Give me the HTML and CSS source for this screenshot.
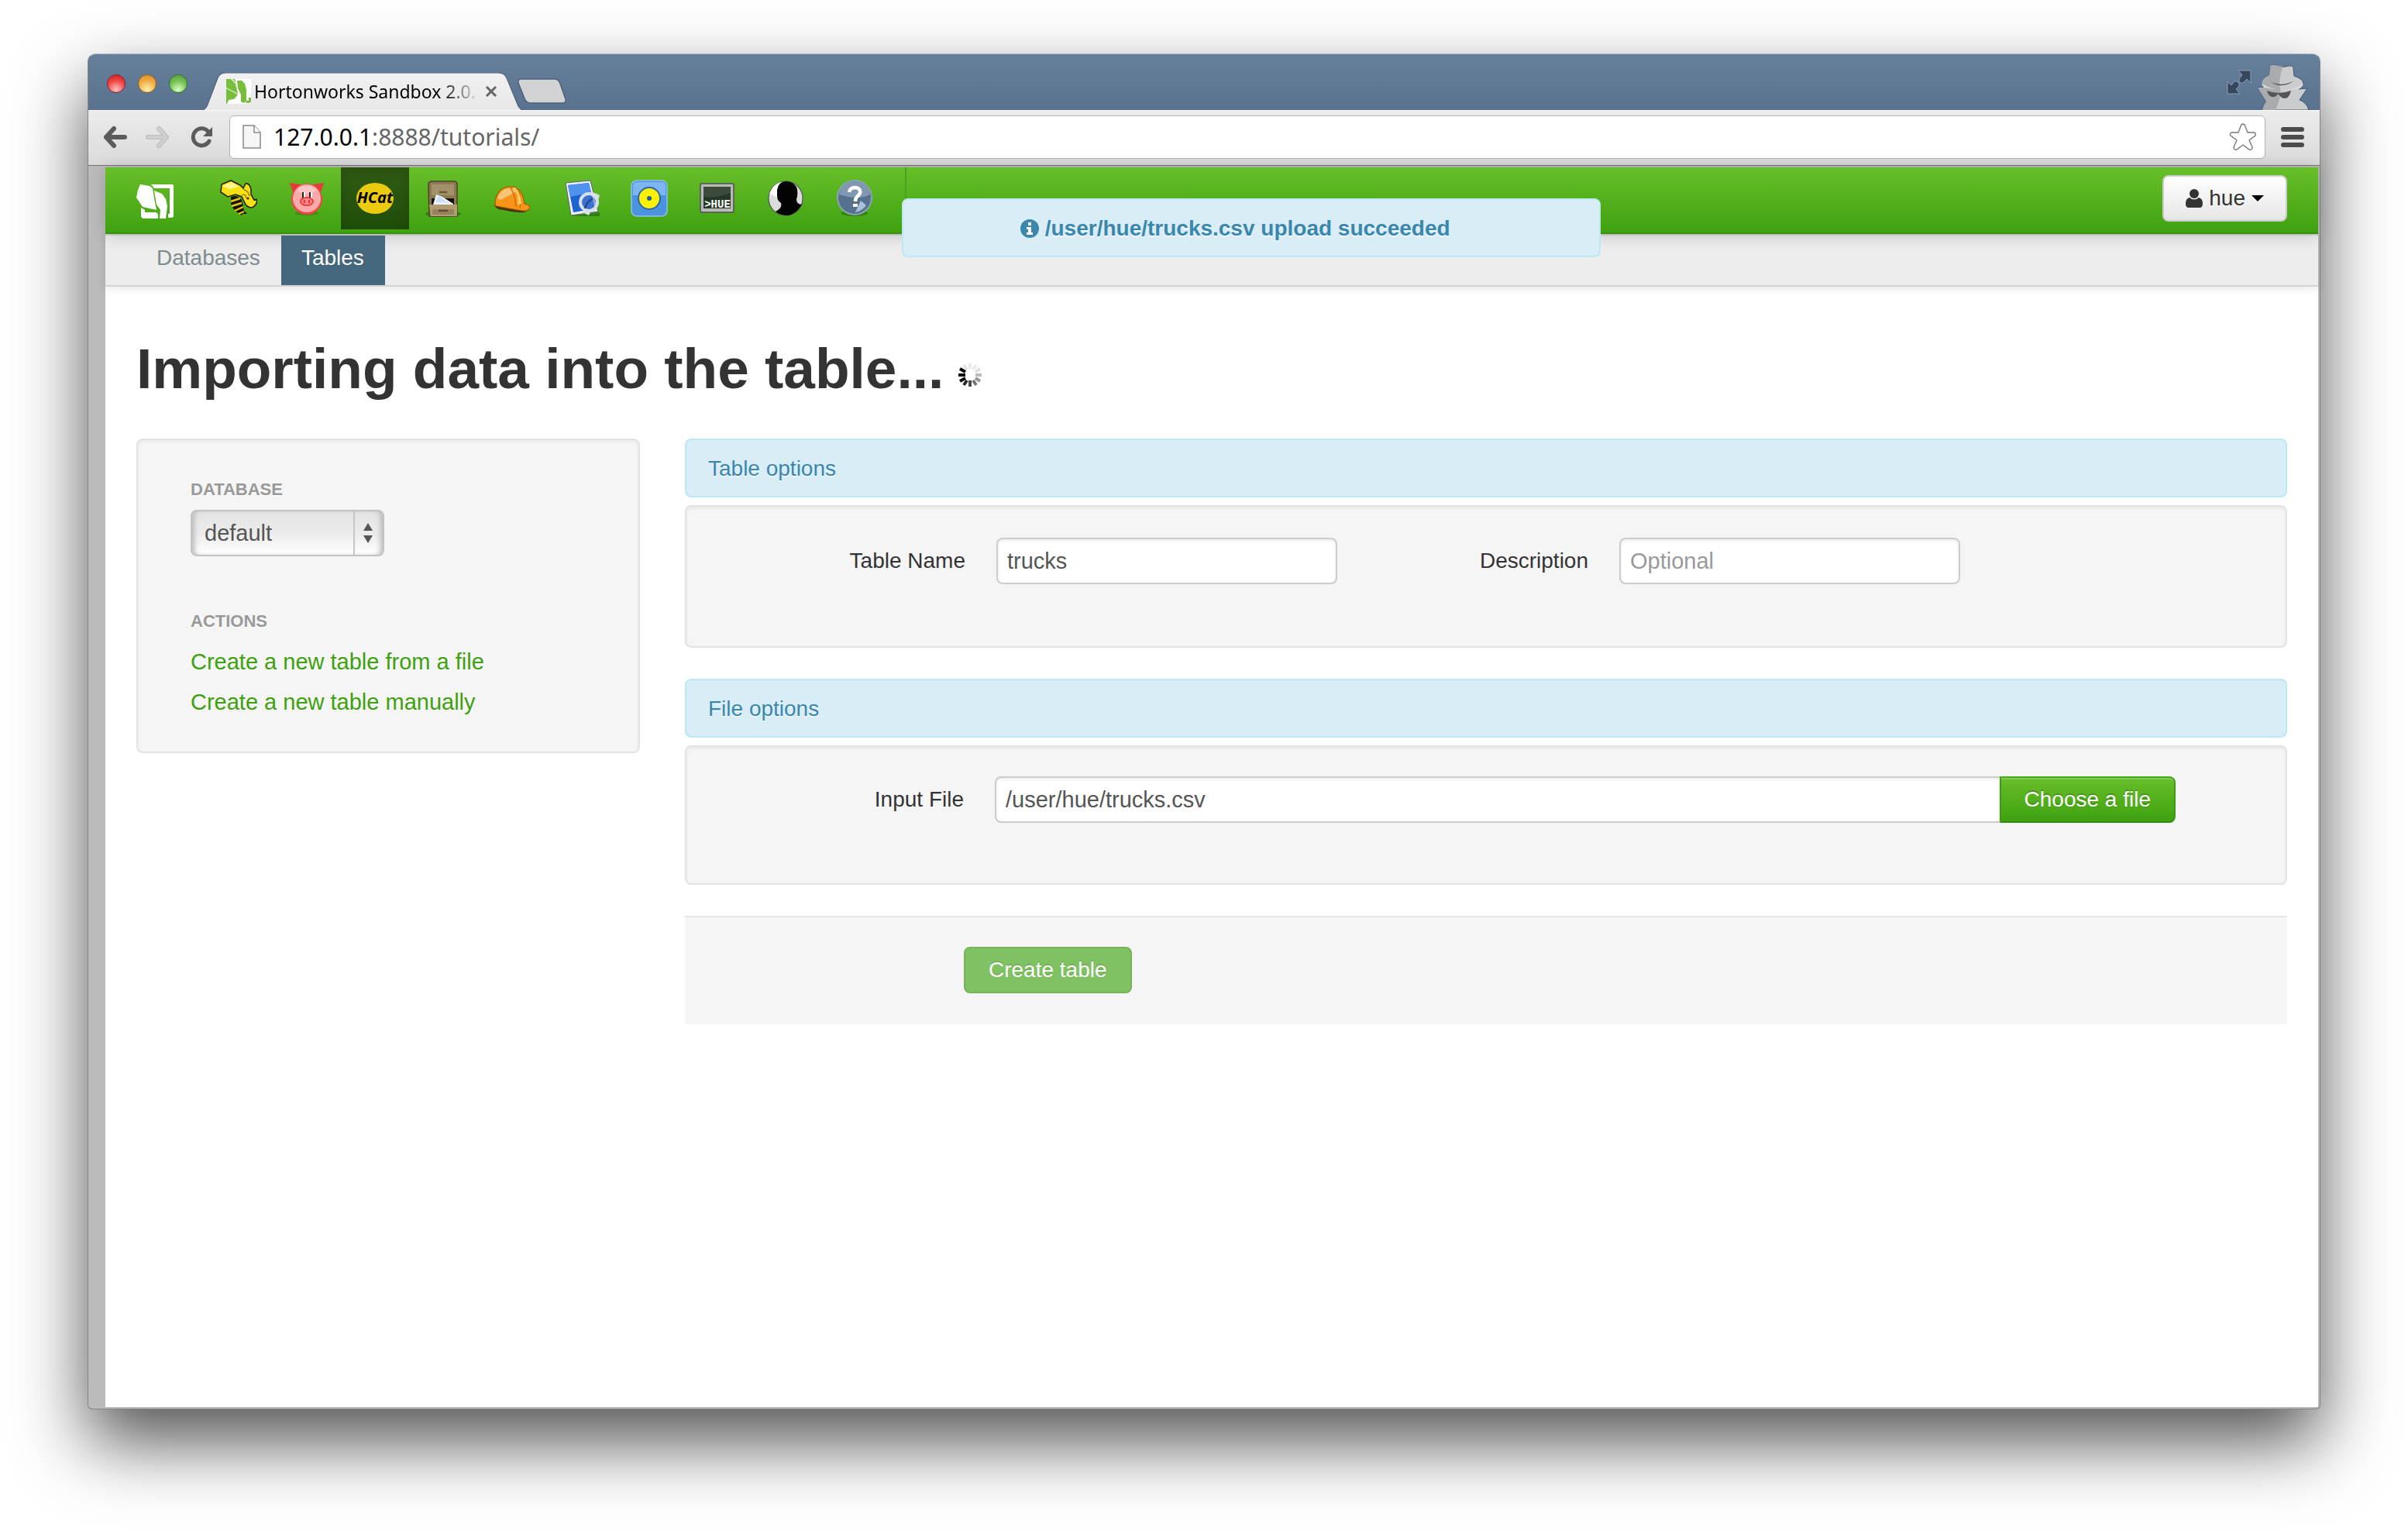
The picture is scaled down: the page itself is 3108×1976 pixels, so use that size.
FILE: index.html
```html
<!DOCTYPE html>
<html lang="en">
<head>
<meta charset="utf-8">
<title>Hortonworks Sandbox 2.0</title>
<link rel="stylesheet" href="styles.css">
</head>
<body>
<div class="window">
  <header class="titlebar">
    <div class="lights">
      <span class="light light-close"></span>
      <span class="light light-min"></span>
      <span class="light light-max"></span>
    </div>
    <div class="tab">
      <svg class="tab-shape" viewBox="0 0 414 48" preserveAspectRatio="none" aria-hidden="true">
        <defs><linearGradient id="tabfill" x1="0" y1="0" x2="0" y2="1"><stop offset="0" stop-color="#f1f1f1"/><stop offset="1" stop-color="#e8e8e8"/></linearGradient></defs>
        <path d="M0 48 Q5 47 7 41 L20 7 Q23 0 30 0 H382 Q390 0 393 7 L407 41 Q409 47 414 48Z" fill="url(#tabfill)"/>
        <path d="M0 48 Q5 47 7 41 L20 7 Q23 0 30 0 H382 Q390 0 393 7 L407 41 Q409 47 414 48" fill="none" stroke="#41546d" stroke-width="1"/>
      </svg>
      <svg class="favicon" width="32" height="32" viewBox="0 0 32 32" aria-hidden="true">
        <rect width="32" height="32" fill="#fff"/>
        <path d="M0 0H6L12 6 15 19 0 11Z M0 12L15 20 10 26 3 27 1 32H0Z M8 0H11L13 5Z" fill="#78be3c"/>
        <path d="M14 2H20L24 6 26 14V29L22 31 19 29 19 20 15 12Z" fill="#78be3c"/>
        <path d="M29 24H32V30H29Z M26 28H30V31H26Z" fill="#78be3c"/>
      </svg>
      <span class="tab-title">Hortonworks Sandbox 2.0.</span>
      <button class="plain" type="button" aria-label="Close tab">
        <svg width="16" height="16" viewBox="0 0 16 16"><path d="M2 2L14 14M14 2L2 14" stroke="#666" stroke-width="3"/></svg>
      </button>
    </div>
    <button class="plain newtab" type="button" aria-label="New tab">
      <svg width="64" height="33" viewBox="0 0 64 33"><path d="M5 1H47Q53 1 55 7L62 27Q63 32 58 32H17Q11 32 9 26L1 6Q0 1 5 1Z" fill="#d3d3d5" stroke="#4c607a" stroke-width="1.5"/></svg>
    </button>
    <div class="titlebar-end">
      <svg class="fullscreen" width="32" height="32" viewBox="0 0 32 32" aria-hidden="true">
        <path d="M15 1H31V17L26 12 21 17H18L16 15V12L20 7Z M1 31V15L6 20 10 15H13L16 18V21L12 25 17 31Z" fill="#34475f" stroke="#8aa0b8" stroke-width="1"/>
      </svg>
      <svg width="70" height="60" viewBox="0 0 70 60" aria-hidden="true">
        <path d="M18 4Q19 1 24 2Q33 6 42 3Q47 2 48 5L49 16Q61 20 61 26Q60 30 55 33L66 32L56 47Q65 50 68 60H8Q9 54 13 49L2 31H10Q7 28 7 25Q9 18 17 15Z" fill="#cbccce" stroke="#3f5470" stroke-width="1"/>
        <path d="M18 4Q19 1 24 2L34 4Q31 14 30 27Q34 40 25 60H8Q9 54 13 49L2 31H10Q7 28 7 25Q9 18 17 15Z" fill="#a9abae"/>
        <path d="M7 26Q34 42 61 26Q60 30 55 33Q34 36 10 31Z" fill="#d9dadb"/>
        <path d="M18 23Q33 31 49 22Q33 34 18 23Z" fill="#555"/>
        <path d="M14 35Q21 38 29 38Q26 44 20 43Q15 41 14 35ZM28 38Q37 38 45 35Q43 45 36 45Q31 44 28 38Z" fill="#555"/>
        <path d="M53 51L65 34L55 48Z" fill="#777"/>
      </svg>
    </div>
  </header>

  <div class="toolbar">
    <button class="plain" type="button" aria-label="Back">
      <svg width="34" height="30" viewBox="0 0 34 30"><path d="M15 4L5 15L15 26M5 15H29" fill="none" stroke="#5b5b5b" stroke-width="6" stroke-linecap="round" stroke-linejoin="round"/></svg>
    </button>
    <button class="plain" type="button" aria-label="Forward">
      <svg width="34" height="30" viewBox="0 0 34 30"><path d="M19 4L29 15L19 26M29 15H5" fill="none" stroke="#bdbdbd" stroke-width="6" stroke-linecap="round" stroke-linejoin="round"/><path d="M19 4L29 15L19 26M29 15H5" fill="none" stroke="#cfcfcf" stroke-width="4" stroke-linecap="round" stroke-linejoin="round"/></svg>
    </button>
    <button class="plain" type="button" aria-label="Reload">
      <svg width="30" height="30" viewBox="0 0 30 30"><path d="M24 20A11 11 0 1 1 22 7" fill="none" stroke="#5b5b5b" stroke-width="5" stroke-linecap="round"/><path d="M28 2V14H16Z" fill="#5b5b5b"/></svg>
    </button>
    <div class="omnibox">
      <svg width="24" height="32" viewBox="0 0 24 32" aria-hidden="true"><path d="M1 1H15L23 10V30H1Z" fill="#f6f6f6" stroke="#8a8a8a" stroke-width="1.5"/><path d="M15 1V10H23" fill="#fff" stroke="#8a8a8a" stroke-width="1.5"/></svg>
      <span class="url"><b>127.0.0.1</b>:8888/tutorials/</span>
      <button class="plain" type="button" aria-label="Bookmark this page">
        <svg width="36" height="36" viewBox="0 0 36 36"><path d="M18 1Q20 1 21 4L24 12H32Q35 13 34 16L26 22L30 31Q30 35 26 34L18 28L10 34Q6 35 6 31L10 22L2 16Q0 13 4 12H12L15 4Q16 1 18 1Z" fill="#fff" stroke="#7a7a7a" stroke-width="1.4"/></svg>
      </button>
    </div>
    <button class="plain" type="button" aria-label="Menu">
      <svg width="30" height="28" viewBox="0 0 30 28"><g fill="#4b4b4b"><rect y="1" width="30" height="6" rx="3"/><rect y="11" width="30" height="6" rx="3"/><rect y="21" width="30" height="6" rx="3"/></g></svg>
    </button>
  </div>

  <div class="viewport">
    <div class="page">
      <nav class="navbar" aria-label="Applications">
        <a class="brand" href="#" aria-label="Hortonworks">
          <svg width="48" height="48" viewBox="0 0 48 48"><g fill="#fff"><path d="M5 2L17 4 21 7 23 20 26 35 8 31 0 19 2 9Z"/><path d="M23 10L33 14 38 21 40 30 38 46H30L31 35 26 28Z"/><path d="M19 2H46Q48 2 48 4V42Q48 45 45 45H41V40H43V7H23ZM6 32L11 35V38H25Q28 39 28 42V46H10Q6 46 6 42Z"/></g></svg>
        </a>
        <a class="app" href="#" aria-label="Beeswax">
          <svg width="48" height="48" viewBox="0 0 48 48">
            <path d="M14 22Q23 19 28 26Q30 33 31 40L35 44H29L28 46Q16 39 14 31Z" fill="#1a1502"/>
            <path d="M14 28L26 24M15 34L28 30M19 40L30 35M24 44L31 41" stroke="#e6c61b" stroke-width="2.4"/>
            <path d="M2 6L14 1 26 7 30 11 33 5Q38 4 40 12L40 19 44 26 48 25Q48 33 41 36Q34 36 31 28L28 22 20 19 10 22 1 16Z" fill="#f5e013" stroke="#2a2304" stroke-width="1.6"/>
            <path d="M3 8L15 3 25 9 12 12Z" fill="#fff58b"/><path d="M30 12L36 16 38 21M28 20Q33 17 34 24" fill="none" stroke="#917a00" stroke-width="1.4"/>
            <circle cx="36" cy="24" r="1.5" fill="#2a2304"/>
          </svg>
        </a>
        <a class="app" href="#" aria-label="Pig">
          <svg width="48" height="48" viewBox="0 0 48 48">
            <ellipse cx="24" cy="43" rx="15" ry="3" fill="#2a740b" opacity=".5"/>
            <path d="M2 4L16 6 6 16Z M46 4L32 6 42 16Z" fill="#e83a3a"/>
            <ellipse cx="24" cy="25" rx="20" ry="20" fill="#f04545"/><ellipse cx="24" cy="24" rx="18" ry="18" fill="#fba9a9"/>
            <ellipse cx="24" cy="13" rx="12" ry="5" fill="#fff" opacity=".3"/>
            <path d="M18 16H20V24H18ZM27 16H29V24H27Z" fill="#222"/><path d="M20 16H22V24H20ZM29 16H31V24H29Z" fill="#fff"/>
            <ellipse cx="24" cy="28" rx="8" ry="5" fill="#fb9090" stroke="#ee3b3b" stroke-width="2"/><ellipse cx="21" cy="28" rx="1.5" ry="2.5" fill="#e83a3a"/><ellipse cx="27" cy="28" rx="1.5" ry="2.5" fill="#e83a3a"/>
          </svg>
        </a>
        <a class="app app-active" href="#">
          <svg width="48" height="48" viewBox="0 0 48 48">
            <ellipse cx="24" cy="24" rx="24" ry="20" fill="#ebcb10"/>
            <text class="hcat" x="24" y="30" text-anchor="middle">HCat</text>
          </svg>
        </a>
        <a class="app" href="#" aria-label="File Browser">
          <svg width="48" height="48" viewBox="0 0 48 48">
            <ellipse cx="24" cy="44" rx="23" ry="4" fill="#23600a" opacity=".6"/>
            <path d="M5 6Q5 2 10 2H38Q42 2 42 6V47H6Z" fill="#8b7954" stroke="#4c4029" stroke-width="1.5"/>
            <path d="M9 6H38V20H9Z" fill="#a3916a"/><path d="M19 16H29" stroke="#6d5c3b" stroke-width="2.5"/>
            <path d="M9 24H38V33H9Z" fill="#16120a"/><path d="M11 32L15 19 23 22 37 31V33H11Z" fill="#eef4fc"/><path d="M14 29L18 20 31 30Z" fill="#cfe0f4"/>
            <path d="M6 32H42V47H8Z" fill="#b19d72"/><path d="M10 45V38H38V45Z" fill="#96835c"/><path d="M18 40H30" stroke="#5d4e31" stroke-width="2.5"/>
          </svg>
        </a>
        <a class="app" href="#" aria-label="Job Designer">
          <svg width="48" height="48" viewBox="0 0 48 48">
            <path d="M2 31Q2 38 14 39Q32 43 41 42Q48 39 47 34L40 29Z" fill="#45340d"/>
            <path d="M3 30Q4 12 20 9Q34 7 39 22L41 31Q47 32 48 36Q46 41 38 40Q20 37 5 34Q2 33 3 30Z" fill="#f7941c" stroke="#a85b00" stroke-width="1.2"/>
            <path d="M6 24Q10 12 20 11Q27 10 31 15L10 26Z" fill="#fcc577"/><path d="M22 9Q29 18 30 35M31 11Q38 20 35 37" fill="none" stroke="#d26d00" stroke-width="1.5"/><path d="M29 10Q36 17 37 31L32 32Q34 18 26 10Z" fill="#fdcf62"/>
          </svg>
        </a>
        <a class="app" href="#" aria-label="Job Browser">
          <svg width="50" height="48" viewBox="0 0 50 48">
            <path d="M12 47L50 42V47Z" fill="#22600b" opacity=".6"/>
            <path d="M6 4L38 1 48 41 13 46Z" fill="#eef2f7" stroke="#59616b" stroke-width="1"/>
            <path d="M9 7L36 4 44 38 16 42Z" fill="#1d63cf"/><path d="M9 7L36 4 39 16Q22 20 12 22Z" fill="#4f93ee"/>
            <path d="M41 16L50 20 47 29ZM24 40L38 41 36 46Z" fill="#dde3ec"/>
            <circle cx="36" cy="29" r="11" fill="#4d7fd0" fill-opacity=".6" stroke="#d9dfe9" stroke-width="4"/>
            <path d="M31 37Q33 29 41 24" fill="none" stroke="#274f98" stroke-width="3"/>
          </svg>
        </a>
        <a class="app" href="#" aria-label="Oozie Editor">
          <svg width="48" height="48" viewBox="0 0 48 48">
            <rect x="1" y="1" width="46" height="46" rx="7" fill="#4b92df" stroke="#8fbdee" stroke-width="1.5"/><path d="M3 8Q3 3 8 3H40Q45 3 45 8V20H3Z" fill="#7fb5f0"/>
            <circle cx="24" cy="24" r="14" fill="#fff200" stroke="#2b66a9" stroke-width="2"/><circle cx="24" cy="24" r="3" fill="#1f5e9c"/>
          </svg>
        </a>
        <a class="app" href="#">
          <svg width="48" height="48" viewBox="0 0 48 48">
            <rect x="2" y="5" width="43" height="37" rx="2" fill="#b9bab8" stroke="#4d524d" stroke-width="1.5"/><rect x="6" y="9" width="35" height="28" fill="#253725"/><path d="M6 9H41V17Q25 24 6 22Z" fill="#3b4b3b"/>
            <text class="shell" x="24" y="36" text-anchor="middle">&gt;HUE</text>
          </svg>
        </a>
        <a class="app" href="#" aria-label="User Admin">
          <svg width="48" height="48" viewBox="0 0 48 48">
            <circle cx="24" cy="24" r="22" fill="#dcdcdc" stroke="#555" stroke-width="1.2"/><path d="M3 18Q8 5 18 3V26Q10 20 3 18Z" fill="#fff"/>
            <path d="M13 13Q15 2 25 2Q37 3 39 13Q40 20 38 25Q38 32 45 32Q37 46 24 46Q15 45 11 41Q20 36 18 30Q13 27 13 20Z" fill="#030303"/>
          </svg>
        </a>
        <a class="app" href="#" aria-label="Help">
          <svg width="48" height="48" viewBox="0 0 48 48">
            <ellipse cx="25" cy="43" rx="17" ry="4" fill="#25640d" opacity=".6"/>
            <circle cx="25" cy="23" r="22" fill="#56718f" stroke="#8ba3ba" stroke-width="2"/><path d="M5 19Q8 3 25 2Q42 3 45 19Q30 27 5 19Z" fill="#8098b2"/><path d="M26 42Q35 40 40 33L33 27Z" fill="#a9c3d4"/>
            <path d="M18 16Q19 10 26 10Q33 11 32 17Q31 20 28 22Q26 24 26 28" fill="none" stroke="#fff" stroke-width="4.5"/><rect x="23" y="31" width="6" height="4" fill="#fff"/>
          </svg>
        </a>
        <span class="nav-divider"></span>
        <button class="btn btn-user" type="button">
          <svg width="22" height="26" viewBox="0 0 22 26" aria-hidden="true"><circle cx="11" cy="7" r="6" fill="#333"/><path d="M5 12Q11 17 17 12Q22 13 22 20Q22 25 18 25H4Q0 25 0 20Q0 13 5 12Z" fill="#333"/></svg>
          <span>hue</span>
          <svg width="16" height="8" viewBox="0 0 16 8" aria-hidden="true"><path d="M0 0H16L8 8Z" fill="#000"/></svg>
        </button>
      </nav>

      <div class="alert toast" role="status">
        <svg width="24" height="24" viewBox="0 0 24 24" aria-hidden="true"><circle cx="12" cy="12" r="12" fill="#3a87ad"/><path d="M10 4H14V8H10ZM8 10H14V17H16V20H8V17H10V13H8Z" fill="#fff"/></svg>
        <strong>/user/hue/trucks.csv upload succeeded</strong>
      </div>

      <nav class="subnav" aria-label="HCatalog">
        <a href="#">Databases</a>
        <a class="current" href="#" aria-current="page">Tables</a>
      </nav>

      <main class="content">
        <h1>Importing data into the table...
          <svg width="32" height="32" viewBox="-16 -16 32 32" aria-hidden="true"><g stroke="#000" stroke-width="4">
            <path d="M0 -8V-15" opacity=".08"/><path d="M4 -7L8 -13" opacity=".08"/><path d="M7 -4L13 -8" opacity=".12"/><path d="M7 0H15" opacity=".25"/><path d="M7 4L13 8" opacity=".4"/><path d="M4 7L8 13" opacity=".55"/><path d="M0 7V15" opacity=".7"/><path d="M-4 7L-8 13" opacity=".85"/><path d="M-6 4L-13 8" opacity=".95"/><path d="M-6 0H-15"/><path d="M-6 -4L-13 -8"/><path d="M-4 -7L-8 -13" opacity=".1"/></g></svg>
        </h1>
        <div class="columns">
          <aside class="well sidebar">
            <label class="side-head" for="db">Database</label>
            <div class="select">
              <select id="db"><option>default</option></select>
              <svg width="14" height="26" viewBox="0 0 14 26" aria-hidden="true"><path d="M7 0L13 10H1ZM7 26L13 16H1Z" fill="#555"/></svg>
            </div>
            <h2 class="side-head actions">Actions</h2>
            <a href="#">Create a new table from a file</a>
            <a href="#">Create a new table manually</a>
          </aside>
          <form class="main">
            <h2 class="alert">Table options</h2>
            <div class="well fields">
              <label for="name">Table Name</label>
              <input id="name" type="text" value="trucks">
              <label for="desc">Description</label>
              <input id="desc" type="text" placeholder="Optional">
            </div>
            <h2 class="alert">File options</h2>
            <div class="well fields fields-file">
              <label for="file">Input File</label>
              <input id="file" type="text" value="/user/hue/trucks.csv">
              <button class="btn btn-primary" type="button">Choose a file</button>
            </div>
            <div class="form-actions">
              <button class="btn btn-disabled" type="submit" disabled>Create table</button>
            </div>
          </form>
        </div>
      </main>
    </div>
  </div>
</div>
</body>
</html>
```
FILE: styles.css
```css
* { box-sizing: border-box; }

body {
  margin: 0;
  min-height: 100vh;
  padding: 69px 113px 157px;
  display: flex;
  background: #fff;
  color: #333;
  font: 28px/40px "Liberation Sans", Arial, sans-serif;
}

a { color: #3fa010; text-decoration: none; }
svg { display: block; flex: none; }
button, input, select { font: inherit; color: inherit; margin: 0; }

.plain {
  padding: 0;
  border: 0;
  background: none;
}

/* Browser window */
.window {
  flex: 1;
  min-width: 0;
  display: flex;
  flex-direction: column;
  border: 1px solid #858585;
  border-top-color: #b9bcc0;
  border-radius: 10px 10px 6px 6px;
  background: #bbb;
  box-shadow: 0 42px 92px rgba(0, 0, 0, .68);
}

.titlebar {
  height: 72px;
  display: flex;
  align-items: flex-end;
  padding-left: 24px;
  border-radius: 9px 9px 0 0;
  background: linear-gradient(#66809c, #59738f);
}

.lights {
  display: flex;
  gap: 16px;
  width: 123px;
  padding-bottom: 22px;
}
.light {
  width: 24px;
  height: 24px;
  border-radius: 50%;
  border: 1px solid;
}
.light-close { background: radial-gradient(circle at 50% 85%, #ffc4c4, #ef4545 55%, #c91c1c); border-color: #8f2323; }
.light-min { background: radial-gradient(circle at 50% 85%, #fff2b0, #f0ac44 55%, #d98426); border-color: #93621d; }
.light-max { background: radial-gradient(circle at 50% 85%, #d9ffc2, #74bf52 55%, #4a9c30); border-color: #3b7429; }

.tab {
  position: relative;
  display: flex;
  align-items: center;
  width: 414px;
  height: 48px;
  padding: 0 33px 0 31px;
}
.tab-shape {
  position: absolute;
  inset: 0;
  width: 100%;
  height: 100%;
}
.favicon, .tab-title, .tab .plain { position: relative; }
.tab-title {
  flex: 1;
  margin: 0 6px 0 4px;
  overflow: hidden;
  white-space: nowrap;
  color: #000;
  font: 23px/32px "Noto Sans", sans-serif;
  mask-image: linear-gradient(90deg, #000 82%, transparent);
}
.newtab { margin: 0 0 8px -7px; }

.titlebar-end {
  display: flex;
  align-items: flex-end;
  gap: 6px;
  margin-left: auto;
  padding-right: 12px;
}
.fullscreen { margin-bottom: 20px; }

.toolbar {
  display: flex;
  align-items: center;
  gap: 20px;
  height: 72px;
  padding: 0 20px 2px 18px;
  border-bottom: 1px solid #737373;
  border-top: 1px solid #fafafa;
  background: linear-gradient(#ececec, #dadada);
}
.toolbar > .plain:nth-child(2) { margin-right: 6px; }
.omnibox {
  flex: 1;
  display: flex;
  align-items: center;
  gap: 16px;
  height: 56px;
  padding: 0 10px 0 16px;
  border: 1px solid #b3b3b3;
  border-radius: 6px;
  background: #fff;
}
.url {
  flex: 1;
  color: #666;
  font: 30px/40px "Noto Sans", sans-serif;
}
.url b { color: #000; font-weight: 400; }

.viewport {
  flex: 1;
  display: flex;
  padding: 2px 2px 2px 22px;
}
.page {
  position: relative;
  flex: 1;
  min-width: 0;
  background: #fff;
}

/* Application bar */
.navbar {
  position: relative;
  z-index: 1;
  display: flex;
  align-items: flex-start;
  height: 86px;
  padding: 0 40px;
  border-bottom: 2px solid #37900e;
  background: linear-gradient(#68bf29, #3fa110);
  box-shadow: 0 2px 20px rgba(0, 0, 0, .18), 0 2px 0 #d2d6d0;
}
.brand {
  display: flex;
  align-items: center;
  height: 88px;
  margin-right: 40px;
}
.app {
  display: flex;
  align-items: center;
  height: 80px;
  padding: 0 20px;
}
.app-active {
  background: linear-gradient(#315c13, #1f4e09);
  box-shadow: inset 0 6px 16px rgba(0, 0, 0, .15);
}
.nav-divider {
  width: 2px;
  height: 84px;
  margin-left: 22px;
  background: #48a31a;
}
.hcat { font: italic 700 20px "Open Sans", sans-serif; }
.shell { font: 700 14px "Liberation Mono", monospace; fill: #fff; }

.btn {
  display: flex;
  align-items: center;
  justify-content: center;
  height: 60px;
  padding: 0 30px;
  border: 2px solid #ccc;
  border-radius: 8px;
  white-space: nowrap;
}
.btn-user {
  gap: 8px;
  margin: 10px 0 0 auto;
  padding: 0 28px;
  background: linear-gradient(#fff, #e6e6e6);
}

.alert {
  margin: 0;
  padding: 17px 28px 15px;
  border: 2px solid #bce8f1;
  border-radius: 8px;
  background: #d9edf7;
  color: #3a87ad;
  font-size: 28px;
  font-weight: 400;
  line-height: 40px;
  text-shadow: 0 2px 0 rgba(255, 255, 255, .5);
}
.toast {
  position: absolute;
  z-index: 2;
  top: 40px;
  left: 36%;
  width: 902px;
  display: flex;
  align-items: center;
  justify-content: center;
  gap: 8px;
  padding-right: 70px;
}

.subnav {
  display: flex;
  height: 68px;
  padding: 2px 40px 0;
  border-bottom: 2px solid #d4d4d4;
  background: #ededed;
  box-shadow: 0 2px 12px rgba(0, 0, 0, .1);
}
.subnav a {
  padding: 9px 27px 0 26px;
  color: #7f8c8d;
  line-height: 40px;
}
.subnav .current {
  position: relative;
  z-index: 1;
  background: #44677c;
  color: #fff;
}

/* Page body */
.content { padding: 66px 40px 40px; }

h1 {
  display: flex;
  align-items: center;
  gap: 18px;
  margin: 0 0 50px;
  font-size: 73px;
  line-height: 80px;
}
h1 svg { margin-top: 16px; }

.columns {
  display: flex;
  align-items: flex-start;
  gap: 58px;
}
.well {
  border: 2px solid #e3e3e3;
  border-radius: 8px;
  background: #f5f5f5;
  box-shadow: inset 0 2px 4px rgba(0, 0, 0, .06);
}
.sidebar {
  display: flex;
  flex-direction: column;
  align-items: flex-start;
  gap: 12px;
  width: 650px;
  padding: 44px 68px;
  font-size: 29px;
}
.side-head {
  margin: 0;
  margin-bottom: -6px;
  color: #999;
  font-size: 22px;
  font-weight: 700;
  line-height: 40px;
  text-transform: uppercase;
  text-shadow: 0 2px 0 rgba(255, 255, 255, .5);
}
.actions { margin: 52px 0 0; }

.select {
  position: relative;
  width: 250px;
  color: #555;
}
.select select {
  appearance: none;
  display: block;
  width: 100%;
  height: 60px;
  padding: 0 16px;
  border: 2px solid #c3c3c3;
  border-radius: 8px;
  background:
    linear-gradient(#c6c6c6, #c6c6c6) right 36px top / 2px 100% no-repeat,
    linear-gradient(#e4e4e4, #ebebeb 50%, #fff);
  box-shadow: inset 6px 0 6px -3px #bbb, inset -6px 0 6px -3px #bbb;
}
.select svg {
  position: absolute;
  right: 14px;
  top: 17px;
  pointer-events: none;
}

.main {
  flex: 1;
  min-width: 0;
}
.fields {
  display: flex;
  align-items: center;
  margin: 10px 0 40px;
  padding: 40px 40px 80px;
}
.fields label {
  width: 320px;
  margin-right: 40px;
  text-align: right;
}
.fields input {
  width: 440px;
  height: 60px;
  margin-right: 4px;
  padding: 0 12px;
  border: 2px solid #ccc;
  border-radius: 8px;
  background: #fff;
  box-shadow: inset 0 2px 4px rgba(0, 0, 0, .08);
  color: #555;
  font-size: 29px;
}
.fields input::placeholder { color: #999; opacity: 1; }
.fields-file { padding: 38px 142px 78px 38px; }
.fields-file input {
  flex: 1;
  margin: 0;
  border-right: 0;
  border-radius: 8px 0 0 8px;
}
.btn-primary {
  border-color: #4aa81c #3d9a12 #358a0d;
  border-radius: 0 8px 8px 0;
  background: linear-gradient(#68bf29, #3fa110);
  box-shadow: inset 0 2px 0 rgba(255, 255, 255, .2);
  color: #fff;
  text-shadow: 0 -2px 0 rgba(0, 0, 0, .2);
}
.form-actions {
  padding: 38px 40px 40px 360px;
  border-top: 2px solid #e5e5e5;
  background: #f5f5f5;
}
.btn-disabled {
  border-color: #76b45b;
  background: #7fc163;
  color: #fff;
  text-shadow: 0 -2px 0 rgba(0, 0, 0, .1);
}
```
